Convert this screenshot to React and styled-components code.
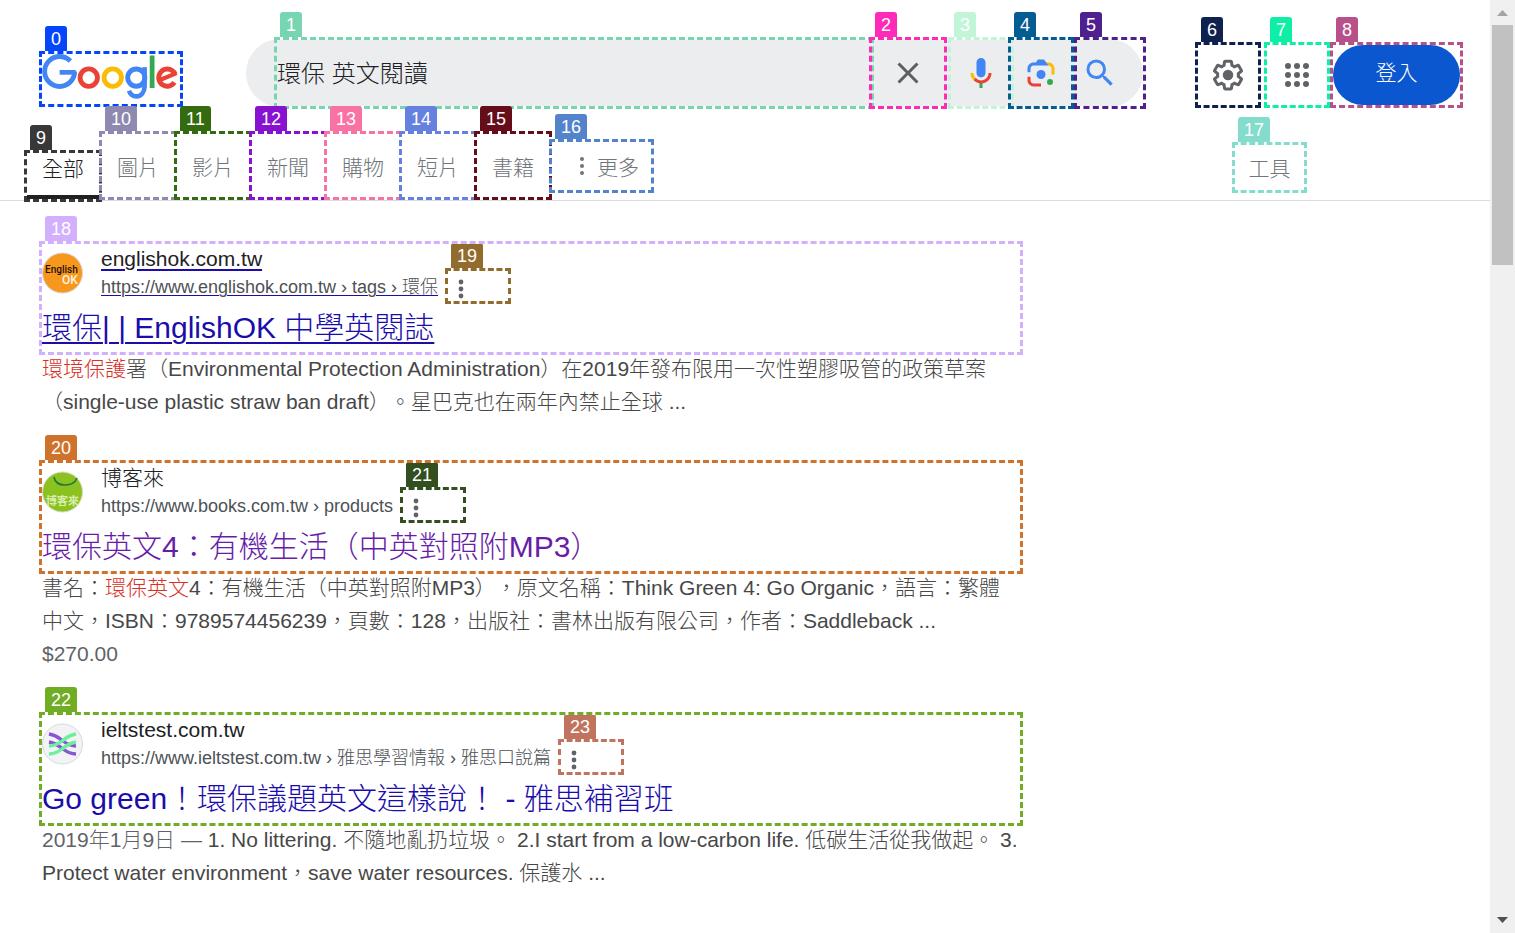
import React from "react";
import styled, { createGlobalStyle } from "styled-components";

const Global = createGlobalStyle`
  *, *::before, *::after { box-sizing: border-box; }
  body {
    margin: 0;
    background: #fff;
    color: #474747;
    font-family: "Liberation Sans", "Noto Sans CJK TC", sans-serif;
    font-weight: 300;
    font-size: 21px;
    text-spacing-trim: space-all;
  }
  button, input { font: inherit; border: 0; padding: 0; background: none; }
  a { color: inherit; text-decoration: none; }
`;

const Page = styled.div`
  display: grid;
  grid-template-columns: minmax(0, 1fr) 25px;
  height: 100vh;
  overflow: hidden;
`;

const Content = styled.div`
  min-width: 0;
`;

/* A marked element: dashed frame just outside its box, numbered tag above. */
const Marked = styled.div`
  position: relative;
  flex: ${(p) => (p.$grow ? "1 1 0" : "none")};
  min-width: 0;
`;

/* The gaps of the top and bottom edges are white, also over the tag. */
const Frame = styled.span`
  position: absolute;
  inset: -3px;
  border: 3px dashed ${(p) => p.$color};
  background:
    linear-gradient(#fff, #fff) top / 100% 3px no-repeat border-box,
    linear-gradient(#fff, #fff) bottom / 100% 3px no-repeat border-box;
  pointer-events: none;
`;

const Tag = styled.span`
  position: absolute;
  left: 3px;
  top: -28px;
  height: 27px;
  padding: 0 6px;
  border-radius: 3px;
  background: ${(p) => p.$color};
  color: #fff;
  font-size: 18px;
  line-height: 26px;
  font-weight: 400;
  pointer-events: none;
`;

function Mark({ n, color, grow, className, children }) {
  return (
    <Marked $grow={grow} className={className}>
      {children}
      <Tag $color={color}>{n}</Tag>
      <Frame $color={color} />
    </Marked>
  );
}

const Header = styled.header`
  border-bottom: 1px solid #dadce0;
`;

const TopRow = styled.div`
  display: flex;
  align-items: flex-start;
  padding: 39px 30px 0 42px;
`;

const LogoMark = styled(Mark)`
  margin: 15px 66px 0 0;
`;

const LogoLink = styled.a`
  display: block;
  width: 138px;
  height: 50px;
`;

const SearchForm = styled.form`
  display: flex;
  flex: 1 1 0;
  max-width: 897px;
  height: 68px;
  padding: 1px 0 1px 31px;
  border-radius: 34px;
  background: #ebedef;
`;

const SearchInput = styled.input`
  display: block;
  width: 100%;
  height: 66px;
  padding-bottom: 4px;
  font-size: 24px;
  color: #202124;
  outline: none;
`;

const IconButton = styled.button`
  display: flex;
  align-items: center;
  justify-content: center;
  width: ${(p) => p.$w || 60}px;
  height: ${(p) => p.$h || 60}px;
  color: #5f6368;
  cursor: pointer;
`;

const MicMark = styled(Mark)`
  margin-left: 7px;
`;

const ClearMark = styled(Mark)`
  margin-left: 1px;
`;

const SubmitMark = styled(Mark)`
  margin-left: 6px;
`;

const SubmitButton = styled(IconButton)`
  justify-content: flex-start;
  padding-left: 5px;
`;

const Actions = styled.div`
  display: flex;
  margin: 6px 0 0 auto;
`;

const AppsMark = styled(Mark)`
  margin: 0 6px 0 9px;
`;

const SignIn = styled.a`
  display: block;
  width: 127px;
  height: 60px;
  border-radius: 30px;
  background: #0b57d0;
  color: #fff;
  text-align: center;
  line-height: 56px;
`;

const Nav = styled.nav`
  display: flex;
  align-items: flex-end;
  gap: 3px;
  height: 93px;
  padding: 0 186px 0 27px;
`;

const TabMark = styled(Mark)`
  margin-bottom: ${(p) => (p.n === 9 ? 1 : 3)}px;
`;

const Tab = styled.a`
  display: block;
  height: ${(p) => (p.$active ? 46 : 63)}px;
  padding: ${(p) => (p.$active ? 0 : 18)}px 15px 0;
  line-height: 32px;
  color: ${(p) => (p.$active ? "#202124" : "#70757a")};
  border-bottom: ${(p) => (p.$active ? "4px solid #202124" : "0")};
`;

const MoreMark = styled(Mark)`
  margin-bottom: 10px;
`;

const MoreButton = styled.button`
  display: flex;
  align-items: center;
  width: 99px;
  height: 48px;
  padding-left: 27px;
  gap: 12px;
  color: #70757a;
`;

const ToolsMark = styled(Mark)`
  margin: 0 0 10px auto;
`;

const ToolsButton = styled.button`
  display: block;
  width: 69px;
  height: 45px;
  padding-bottom: 2px;
  color: #70757a;
`;

const Results = styled.main`
  display: flex;
  flex-direction: column;
  gap: 45px;
  max-width: 1020px;
  padding: 43px 0 0 42px;
`;

const Lead = styled.div`
  height: 108px;
`;

const Site = styled.div`
  display: flex;
  align-items: center;
  gap: 18px;
  height: 58px;
`;

const SiteLines = styled.div`
  display: flex;
  flex-direction: column;
`;

const SiteName = styled.a`
  line-height: 30px;
  color: #202124;
  text-decoration: ${(p) => (p.$hover ? "underline 2px #1a0dab" : "none")};
  text-underline-offset: 3px;
`;

const UrlLine = styled.div`
  display: flex;
  gap: 10px;
  height: 28px;
`;

const Url = styled.a`
  font-size: 18px;
  line-height: 26px;
  color: #4d5156;
  white-space: nowrap;
  text-decoration: ${(p) => (p.$hover ? "underline 1px #1a0dab" : "none")};
  text-underline-offset: 2px;
`;

const KebabButton = styled(IconButton)`
  width: 60px;
  height: 30px;
  justify-content: flex-start;
  padding: 6px 0 0 10px;
`;

const KebabMark = styled(Mark)`
  align-self: flex-start;
  margin-top: -3px;
`;

const Title = styled.h3`
  margin: 0;
  font-size: 30px;
  font-weight: 300;
  line-height: 52px;
  height: 50px;
  color: ${(p) => (p.$visited ? "#681da8" : "#1a0dab")};
  white-space: nowrap;
  a {
    text-decoration: ${(p) => (p.$hover ? "underline 2px" : "none")};
    text-underline-offset: 4px;
  }
`;

const Snippet = styled.p`
  margin: 0;
  line-height: 33px;
  em { font-style: normal; color: #d93025; }
`;

const Muted = styled.span`
  color: #5f6368;
`;

const Scrollbar = styled.div`
  display: flex;
  flex-direction: column;
  align-items: center;
  background: #f0f0f0;
`;

const ScrollArrow = styled.svg`
  flex: none;
  width: 25px;
  height: 25px;
`;

const Thumb = styled.div`
  width: 21px;
  height: 240px;
  margin-bottom: auto;
  background: #c1c1c1;
`;

const Ring = (p) => <circle fill="none" strokeWidth="9.7" pathLength="360" {...p} />;

const Logo = () => (
  <svg width="136" height="46" viewBox="0 0 272 92" role="img" aria-label="Google">
    <g stroke="#4285f4">
      <Ring cx="35.3" cy="34.9" r="30" strokeDasharray="314 46" />
      <rect x="35.3" y="32" width="32" height="9.4" fill="#4285f4" stroke="none" />
    </g>
    <Ring cx="93.5" cy="47.2" r="17.4" stroke="#ea4335" />
    <Ring cx="141.5" cy="47.2" r="17.4" stroke="#fbbc05" />
    <g stroke="#4285f4">
      <Ring cx="188.6" cy="47.2" r="17.2" />
      <rect x="200.5" y="26.3" width="9.3" height="40.5" fill="#4285f4" stroke="none" />
      <ellipse cx="188.8" cy="66" rx="16.3" ry="18.8" fill="none" strokeWidth="9.2" pathLength="360" strokeDasharray="155 205" />
    </g>
    <rect x="215.5" y="3" width="9.5" height="65" fill="#34a853" />
    <g stroke="#ea4335">
      <Ring cx="250.6" cy="47.2" r="17.2" strokeDasharray="303 57" transform="rotate(34 250.6 47.2)" />
      <line x1="237" y1="51.5" x2="269" y2="38.3" strokeWidth="8.2" />
    </g>
  </svg>
);

const Close = () => (
  <svg width="36" height="36" viewBox="0 0 24 24" fill="#5e5e5e">
    <path d="M19 6.41L17.59 5 12 10.59 6.41 5 5 6.41 10.59 12 5 17.59 6.41 19 12 13.41 17.59 19 19 17.59 13.41 12z" />
  </svg>
);

const Mic = () => (
  <svg width="36" height="36" viewBox="0 0 24 24">
    <path fill="#4285f4" d="m12 15c1.66 0 3-1.31 3-2.97v-7.02c0-1.66-1.34-3.01-3-3.01s-3 1.34-3 3.01v7.02c0 1.66 1.34 2.97 3 2.97z" />
    <path fill="#34a853" d="m11 18.08h2v3.92h-2z" />
    <path fill="#fbbc05" d="m7.05 16.87c-1.27-1.33-2.05-2.83-2.05-4.87h2c0 1.45 0.56 2.42 1.47 3.38v0.32l-1.15 1.18z" />
    <path fill="#ea4335" d="m12 16.93a4.97 5.25 0 0 1 -3.54 -1.55l-1.41 1.49c1.26 1.34 3.02 2.13 4.95 2.13 3.87 0 6.99-2.92 6.99-7h-1.99c0 2.92-2.24 4.93-5 4.93z" />
  </svg>
);

const Lens = () => (
  <svg width="36" height="36" viewBox="0 0 192 192">
    <circle fill="#34a853" cx="144.07" cy="144" r="16" />
    <circle fill="#4285f4" cx="96.07" cy="104" r="24" />
    <path fill="#ea4335" d="M24,135.2c0,18.11,14.69,32.8,32.8,32.8H96v-16l-40.1-0.1c-8.8,0-15.9-8.19-15.9-17.9v-18H24V135.2z" />
    <path fill="#fbbc05" d="M168,72.8c0-18.11-14.69-32.8-32.8-32.8H116l20,16c8.8,0,16,8.29,16,18v30h16V72.8z" />
    <path fill="#4285f4" d="M112,24l-32,0L68,40H56.8C38.69,40,24,54.69,24,72.8V92h16V74c0-9.71,7.2-18,16-18h80L112,24z" />
  </svg>
);

const Magnifier = () => (
  <svg width="36" height="36" viewBox="0 0 24 24" fill="#4285f4">
    <path d="M15.5 14h-.79l-.28-.27A6.471 6.471 0 0 0 16 9.5 6.5 6.5 0 1 0 9.5 16c1.61 0 3.09-.59 4.23-1.57l.27.28v.79l5 4.99L20.49 19l-4.99-5zm-6 0C7.01 14 5 11.99 5 9.5S7.01 5 9.5 5 14 7.01 14 9.5 11.99 14 9.5 14z" />
  </svg>
);

const Gear = () => (
  <svg width="36" height="36" viewBox="0 0 24 24" fill="currentColor">
    <path d="M13.85 22.25h-3.7c-.74 0-1.36-.54-1.45-1.27l-.27-1.89c-.27-.14-.53-.29-.79-.46l-1.8.72c-.7.26-1.47-.03-1.81-.65L2.2 15.53c-.35-.66-.2-1.44.36-1.88l1.53-1.19c-.01-.15-.02-.3-.02-.46 0-.15.01-.31.02-.46l-1.52-1.19c-.59-.45-.74-1.26-.37-1.88l1.85-3.19c.34-.62 1.11-.9 1.79-.63l1.81.73c.26-.17.52-.32.78-.46l.27-1.91c.09-.7.71-1.25 1.44-1.25h3.7c.74 0 1.36.54 1.45 1.27l.27 1.89c.27.14.53.29.79.46l1.8-.72c.71-.26 1.48.03 1.82.65l1.84 3.18c.36.66.2 1.44-.36 1.88l-1.52 1.19c.01.15.02.3.02.46s-.01.31-.02.46l1.52 1.19c.56.45.72 1.23.37 1.86l-1.86 3.22c-.34.62-1.11.9-1.8.63l-1.8-.72c-.26.17-.52.32-.78.46l-.27 1.91c-.1.68-.72 1.22-1.46 1.22zm-3.23-2h2.76l.37-2.55.53-.22c.44-.18.88-.44 1.34-.78l.45-.34 2.38.96 1.38-2.4-2.03-1.58.07-.56c.03-.26.06-.51.06-.78s-.03-.53-.06-.78l-.07-.56 2.03-1.58-1.39-2.4-2.39.96-.45-.35c-.42-.32-.87-.58-1.33-.77l-.52-.22-.37-2.55h-2.76l-.37 2.55-.53.21c-.44.19-.88.44-1.34.79l-.45.33-2.38-.95-1.39 2.39 2.03 1.58-.07.56a7 7 0 0 0-.06.79c0 .26.02.53.06.78l.07.56-2.03 1.58 1.38 2.4 2.39-.96.45.35c.43.33.86.58 1.33.77l.53.22.38 2.55z" />
    <circle cx="12" cy="12" r="3.5" />
  </svg>
);

const Apps = () => (
  <svg width="36" height="36" viewBox="0 0 24 24" fill="currentColor">
    {[6, 12, 18].map((y) => [6, 12, 18].map((x) => <circle key={`${x}-${y}`} cx={x} cy={y} r="2" />))}
  </svg>
);

const Dots = ({ step = 7, r = 2.4 }) => (
  <svg width="6" height="24" viewBox="0 0 6 24" fill="currentColor">
    {[-1, 0, 1].map((i) => <circle key={i} cx="3" cy={12 + i * step} r={r} />)}
  </svg>
);

const Favicon = styled.svg`
  flex: none;
  width: 41px;
  height: 42px;
`;

const EnglishOkIcon = () => (
  <Favicon viewBox="0 0 41 42">
    <circle cx="20.5" cy="21" r="20" fill="#f7981d" stroke="#d6d6dc" />
    <text x="3" y="21" fontSize="10" fontWeight="500" fontFamily="Roboto, sans-serif" fill="#1c1408">English</text>
    <text x="20" y="32" fontSize="12" fontWeight="500" fontFamily="Roboto, sans-serif" fill="#fff3e0">OK</text>
  </Favicon>
);

const BooksIcon = () => (
  <Favicon viewBox="0 0 41 42">
    <circle cx="20.5" cy="21" r="20" fill="#8cc21f" stroke="#d5dcc8" />
    <path d="M12 6c1 6 6 8 11 8s10-2 12-7" fill="none" stroke="#1b7a35" strokeWidth="1.6" />
    <text x="4" y="34" fontSize="11" fontWeight="700" fontFamily="Noto Sans CJK TC, sans-serif" fill="#d9efb0">博客來</text>
  </Favicon>
);

const IeltsIcon = () => (
  <Favicon viewBox="0 0 41 42">
    <circle cx="20.5" cy="21" r="20" fill="#f1f3f4" stroke="#d7d9de" />
    <g fill="none" strokeWidth="3.4">
      <path d="M7 11c7 1 10 4 14 7s8 5 13 5" stroke="#8c52d9" />
      <path d="M7 19c7 1 10 4 14 7s8 5 13 5" stroke="#8c52d9" />
      <path d="M34 11c-7 1-10 4-14 7s-8 5-13 5" stroke="#6cf09a" />
      <path d="M34 19c-7 1-10 4-14 7s-8 5-13 5" stroke="#6cf09a" />
    </g>
  </Favicon>
);

const tabs = [
  [9, "全部", "#383838"],
  [10, "圖片", "#8d89b0"],
  [11, "影片", "#356b10"],
  [12, "新聞", "#8812d0"],
  [13, "購物", "#f972a4"],
  [14, "短片", "#6680df"],
  [15, "書籍", "#650d18"],
];

const results = [
  {
    n: 18, color: "#d2b0fd", menuN: 19, menuColor: "#926c2c", icon: <EnglishOkIcon />, hover: true,
    site: "englishok.com.tw", url: "https://www.englishok.com.tw › tags › 環保",
    title: "環保| | EnglishOK 中學英閱誌",
    snippet: <><em>環境保護</em>署（Environmental Protection Administration）在2019年發布限用一次性塑膠吸管的政策草案（single-use plastic straw ban draft）。星巴克也在兩年內禁止全球 ...</>,
  },
  {
    n: 20, color: "#cf722b", menuN: 21, menuColor: "#334f20", icon: <BooksIcon />, visited: true,
    site: "博客來", url: "https://www.books.com.tw › products",
    title: "環保英文4：有機生活（中英對照附MP3）",
    snippet: <>書名：<em>環保英文</em>4：有機生活（中英對照附MP3），原文名稱：Think Green 4: Go Organic，語言：繁體中文，ISBN：9789574456239，頁數：128，出版社：書林出版有限公司，作者：Saddleback ...</>,
    price: "$270.00",
  },
  {
    n: 22, color: "#71ad24", menuN: 23, menuColor: "#c0745f", icon: <IeltsIcon />,
    site: "ieltstest.com.tw", url: "https://www.ieltstest.com.tw › 雅思學習情報 › 雅思口說篇",
    title: "Go green！環保議題英文這樣說！ - 雅思補習班",
    snippet: <><Muted>2019年1月9日 — </Muted>1. No littering. 不隨地亂扔垃圾。 2.I start from a low-carbon life. 低碳生活從我做起。 3. Protect water environment，save water resources. 保護水 ...</>,
  },
];

function Result({ r }) {
  return (
    <article>
      <Mark n={r.n} color={r.color}>
        <Lead>
          <Site>
            {r.icon}
            <SiteLines>
              <SiteName href="#" $hover={r.hover}>{r.site}</SiteName>
              <UrlLine>
                <Url href="#" $hover={r.hover}>{r.url}</Url>
                <KebabMark n={r.menuN} color={r.menuColor}>
                  <KebabButton type="button" aria-label="關於這個結果"><Dots /></KebabButton>
                </KebabMark>
              </UrlLine>
            </SiteLines>
          </Site>
          <Title $visited={r.visited} $hover={r.hover}><a href="#">{r.title}</a></Title>
        </Lead>
      </Mark>
      <Snippet>{r.snippet}</Snippet>
      {r.price && <Snippet><Muted>{r.price}</Muted></Snippet>}
    </article>
  );
}

export default function App() {
  return (
    <Page lang="zh-Hant">
      <Global />
      <Content>
        <Header>
          <TopRow>
            <LogoMark n={0} color="#0546fb">
              <LogoLink href="#"><Logo /></LogoLink>
            </LogoMark>
            <SearchForm role="search">
              <Mark n={1} color="#77d5b2" grow>
                <SearchInput type="text" aria-label="搜尋" defaultValue="環保 英文閱讀" />
              </Mark>
              <ClearMark n={2} color="#fd2bb8">
                <IconButton type="button" $w={72} $h={66} aria-label="清除"><Close /></IconButton>
              </ClearMark>
              <MicMark n={3} color="#c2f5d8">
                <IconButton type="button" $h={66} aria-label="語音搜尋"><Mic /></IconButton>
              </MicMark>
              <Mark n={4} color="#035c92">
                <IconButton type="button" $h={66} aria-label="以圖搜尋"><Lens /></IconButton>
              </Mark>
              <SubmitMark n={5} color="#4f218e">
                <SubmitButton type="submit" $w={66} $h={66} aria-label="搜尋"><Magnifier /></SubmitButton>
              </SubmitMark>
            </SearchForm>
            <Actions>
              <Mark n={6} color="#0f224f">
                <IconButton type="button" aria-label="設定"><Gear /></IconButton>
              </Mark>
              <AppsMark n={7} color="#0eefa5">
                <IconButton type="button" aria-label="應用程式"><Apps /></IconButton>
              </AppsMark>
              <Mark n={8} color="#b8508a">
                <SignIn href="#">登入</SignIn>
              </Mark>
            </Actions>
          </TopRow>
          <Nav>
            {tabs.map(([n, label, color], i) => (
              <TabMark key={n} n={n} color={color}>
                <Tab href="#" $active={i === 0}>{label}</Tab>
              </TabMark>
            ))}
            <MoreMark n={16} color="#5384cb">
              <MoreButton type="button"><Dots r={2} />更多</MoreButton>
            </MoreMark>
            <ToolsMark n={17} color="#83dccc">
              <ToolsButton type="button">工具</ToolsButton>
            </ToolsMark>
          </Nav>
        </Header>
        <Results>
          {results.map((r) => <Result key={r.n} r={r} />)}
        </Results>
      </Content>
      <Scrollbar aria-hidden="true">
        <ScrollArrow viewBox="0 0 25 25"><path d="M7 16l5.5-6 5.5 6z" fill="#a3a3a3" /></ScrollArrow>
        <Thumb />
        <ScrollArrow viewBox="0 0 25 25"><path d="M7 9l5.5 6 5.5-6z" fill="#505050" /></ScrollArrow>
      </Scrollbar>
    </Page>
  );
}
